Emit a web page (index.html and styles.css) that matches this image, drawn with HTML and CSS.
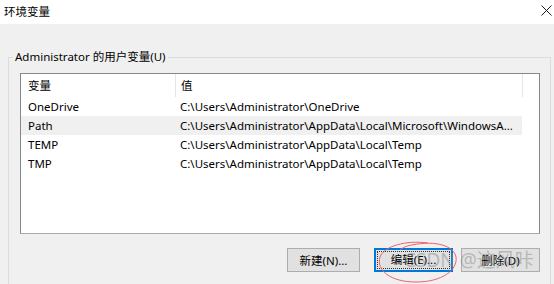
FILE: index.html
```html
<!DOCTYPE html>
<html lang="zh-CN">
<head>
    <meta charset="UTF-8">
    <title>环境变量</title>
    <link rel="stylesheet" href="styles.css">
</head>
<body>
    <div class="titlebar">
        <span class="title">环境变量</span>
        <span class="close">
            <svg width="11" height="11" viewBox="0 0 11 11"><path d="M0.5 0.5L10.5 10.5M10.5 0.5L0.5 10.5" stroke="#1a1a1a" stroke-width="1" fill="none"/></svg>
        </span>
    </div>

    <div class="dialog">
        <fieldset class="group">
            <legend>Administrator 的用户变量(U)</legend>

            <div class="listview">
                <div class="row head">
                    <div class="col-name">变量</div>
                    <div class="col-value">值</div>
                </div>
                <div class="row">
                    <div class="col-name">OneDrive</div>
                    <div class="col-value">C:\Users\Administrator\OneDrive</div>
                </div>
                <div class="row hover">
                    <div class="col-name">Path</div>
                    <div class="col-value">C:\Users\Administrator\AppData\Local\Microsoft\WindowsA...</div>
                </div>
                <div class="row">
                    <div class="col-name">TEMP</div>
                    <div class="col-value">C:\Users\Administrator\AppData\Local\Temp</div>
                </div>
                <div class="row">
                    <div class="col-name">TMP</div>
                    <div class="col-value">C:\Users\Administrator\AppData\Local\Temp</div>
                </div>
            </div>

            <div class="buttons">
                <button class="btn btn-new">新建(N)...</button>
                <button class="btn btn-edit focused"><span>编辑(E)...</span></button>
                <button class="btn btn-del">删除(D)</button>
            </div>
        </fieldset>
    </div>

    <!-- annotation + watermark from the original screenshot -->
    <svg class="annotation" width="90" height="46" viewBox="0 0 90 46">
        <path d="M52 3 C30 0 8 6 4 17 C0 30 14 42 40 42 C66 42 82 30 80 17 C78 6 60 0 36 5 C30 6 26 8 24 10" stroke="#e86470" stroke-width="1" fill="none"/>
    </svg>
    <div class="watermark">CSDN @这风咔</div>
</body>
</html>
```

FILE: styles.css
```css
body {
    margin: 0;
    width: 554px;
    height: 284px;
    overflow: hidden;
    position: relative;
    font-family: "Noto Sans", "Noto Sans CJK SC", sans-serif;
    font-size: 11.5px;
    color: #000;
    background-color: #f0f0f0;
}
.titlebar {
    height: 24px;
    background-color: #fff;
    display: flex;
    align-items: center;
    justify-content: space-between;
    padding: 0 1px 0 4px;
}
.title {
    line-height: 16px;
    margin-top: -1px;
}
.close {
    width: 11px;
    height: 11px;
    margin-top: -4px;
    margin-right: 1px;
}
.close svg {
    display: block;
}
.dialog {
    padding: 25px 3px 0 8px;
}
.group {
    margin: 0;
    padding: 8px 10px 0 11px;
    border: 1px solid #dcdcdc;
    height: 240px;
}
.group legend {
    padding: 0 2px;
    margin-left: -7px;
    line-height: 16px;
}
.listview {
    height: 159px;
    background-color: #fff;
    border: 1px solid #828790;
    border-bottom-color: #a6a9ae;
}
.row {
    display: flex;
    height: 19px;
    line-height: 19px;
}
.row.head {
    height: 23px;
    line-height: 24px;
}
.row.hover {
    background-color: #f0f0f0;
    width: 501px;
}
.col-name {
    width: 147px;
    padding-left: 7px;
    flex: none;
}
.col-value {
    padding-left: 5px;
    white-space: nowrap;
}
.head .col-name {
    border-right: 1px solid #e5e5e5;
}
.head .col-value {
    width: 341px;
    border-right: 1px solid #e5e5e5;
}
.buttons {
    display: flex;
    justify-content: flex-end;
    margin-top: 14px;
}
.btn {
    height: 24px;
    padding: 0;
    font-family: inherit;
    font-size: 11.5px;
    color: #000;
    background-color: #e1e1e1;
    border: 1px solid #adadad;
}
.btn-new {
    width: 73px;
}
.btn-edit {
    width: 79px;
    margin-left: 14px;
}
.btn-del {
    width: 79px;
    margin-left: 8px;
}
.btn.focused {
    border: 2px solid #0078d7;
    padding: 1px;
}
.btn.focused span {
    display: block;
    height: 100%;
    line-height: 16px;
    border: 1px dotted #333;
    box-sizing: border-box;
}
.annotation {
    position: absolute;
    left: 376px;
    top: 240px;
}
.watermark {
    position: absolute;
    left: 404px;
    top: 249px;
    font-size: 19px;
    line-height: 22px;
    white-space: nowrap;
    color: rgba(140, 140, 140, 0.5);
}
```
